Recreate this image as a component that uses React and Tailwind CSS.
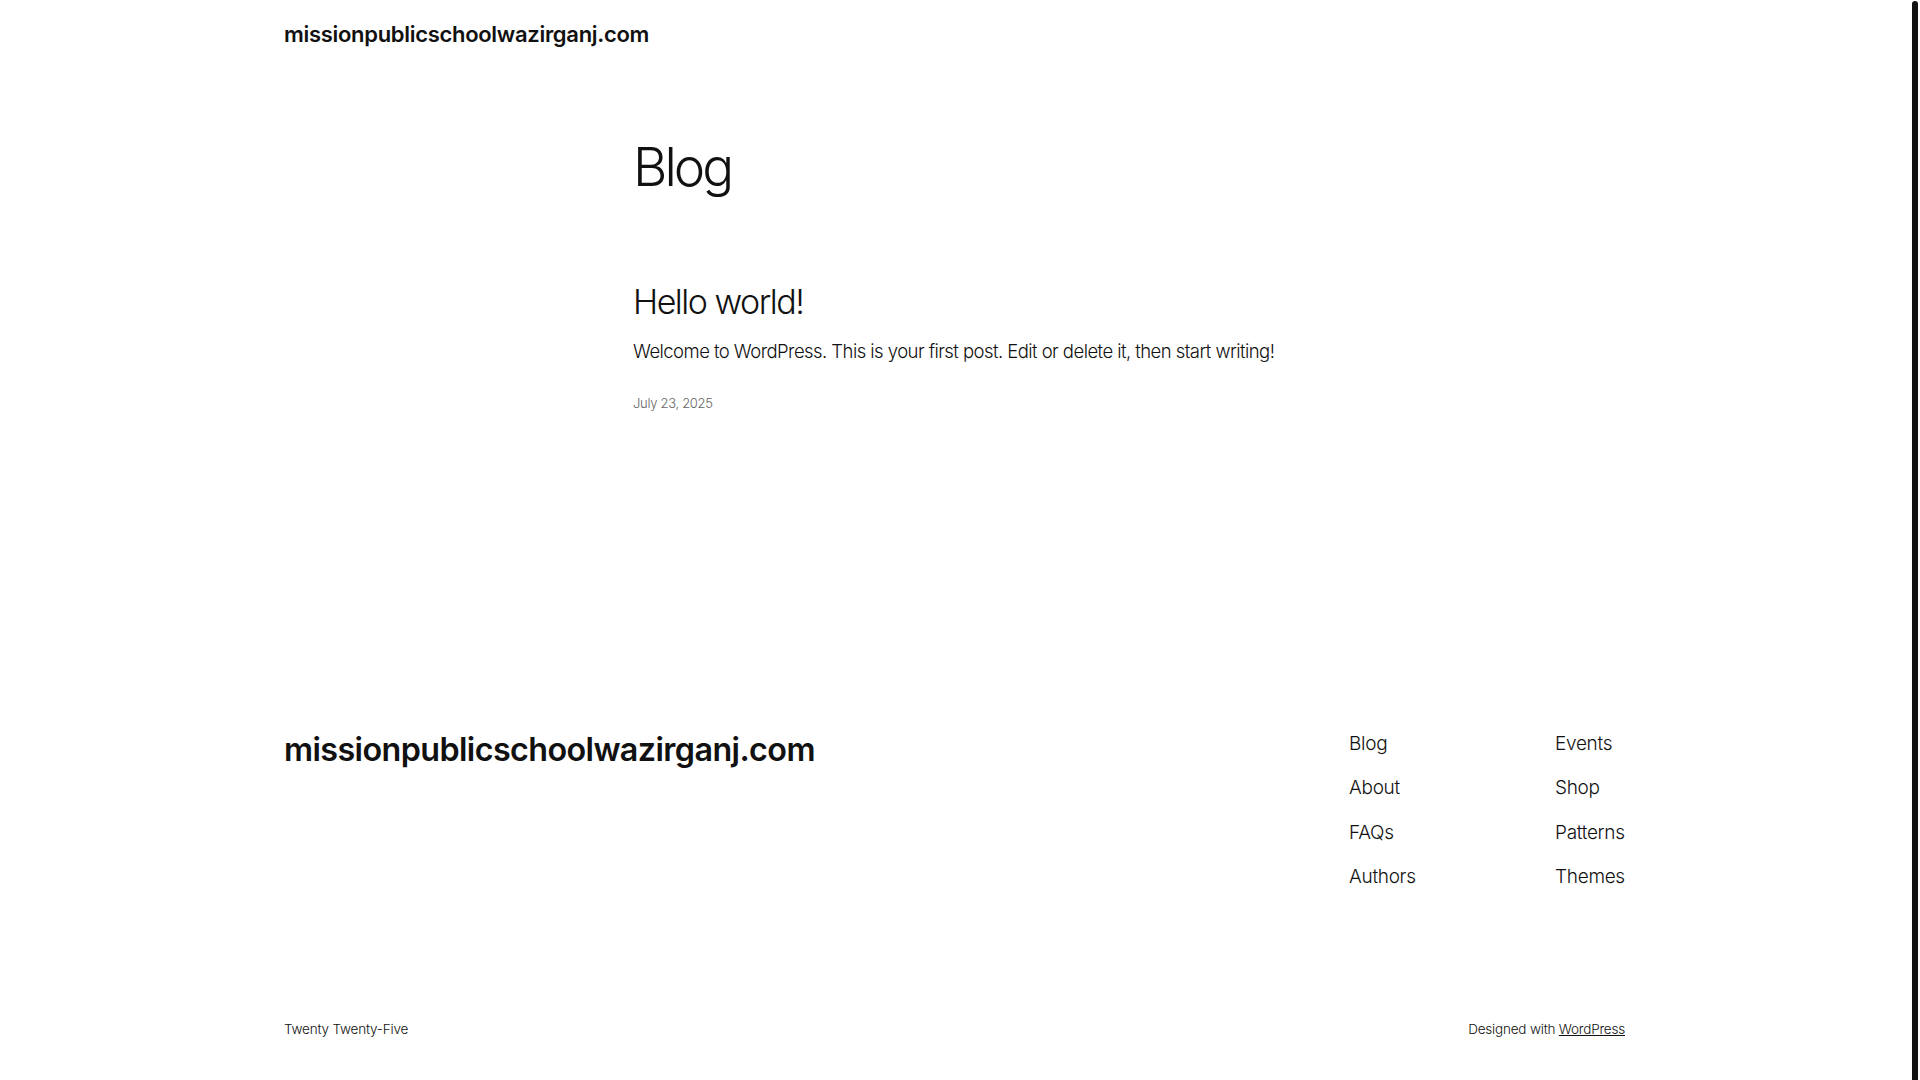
import React from "react";

const navLeft = ["Blog", "About", "FAQs", "Authors"];
const navRight = ["Events", "Shop", "Patterns", "Themes"];

export default function App() {
  return (
    <div className="flex min-h-screen bg-white text-[#111111] font-['Inter','Noto_Sans',sans-serif]">
      <div className="flex-1 flex flex-col">
        {/* Header */}
        <header className="h-[70px] flex items-center">
          <div className="w-[1341px] ml-[284px]">
            <a className="text-[22px] font-semibold tracking-[-0.3px] leading-none">
              missionpublicschoolwazirganj.com
            </a>
          </div>
        </header>

        {/* Main */}
        <main className="w-[645px] ml-[633px]">
          <h1 className="mt-[71px] text-[53px] font-light leading-none tracking-[-3px]">Blog</h1>

          <article className="mt-[91px]">
            <h2 className="text-[34px] font-light leading-none tracking-[-1.5px]">Hello world!</h2>
            <p className="mt-[18px] text-[18.5px] font-light leading-[28px] tracking-[-0.55px] whitespace-nowrap">
              Welcome to WordPress. This is your first post. Edit or delete it, then start writing!
            </p>
            <div className="mt-[28px] text-[13px] font-light leading-[20px] text-[#666666] tracking-[-0.3px]">
              July 23, 2025
            </div>
          </article>
        </main>

        {/* Footer */}
        <footer className="w-[1341px] ml-[284px] mt-[316px]">
          <div className="flex justify-between items-start">
            <div className="text-[32.3px] font-semibold leading-[41px] tracking-[-0.6px]">
              missionpublicschoolwazirganj.com
            </div>
            <div className="flex pt-[0.5px]">
              <ul className="w-[206px] flex flex-col gap-[16px]">
                {navLeft.map((n) => (
                  <li key={n} className="text-[19px] font-light leading-[28.5px] tracking-[-0.3px]">{n}</li>
                ))}
              </ul>
              <ul className="w-[70px] flex flex-col gap-[16px]">
                {navRight.map((n) => (
                  <li key={n} className="text-[19px] font-light leading-[28.5px] tracking-[-0.3px] whitespace-nowrap">{n}</li>
                ))}
              </ul>
            </div>
          </div>
          <div className="mt-[127px] flex justify-between items-center text-[13.5px] font-light leading-[20px] tracking-[-0.2px] pb-[50px]">
            <span>Twenty Twenty-Five</span>
            <span>
              Designed with <a className="underline">WordPress</a>
            </span>
          </div>
        </footer>
      </div>

      {/* Scrollbar */}
      <div className="w-[15px] flex justify-end pr-[2px] pt-[1px] pb-[5px]">
        <div className="w-[6px] rounded-full bg-[#111111]" />
      </div>
    </div>
  );
}
